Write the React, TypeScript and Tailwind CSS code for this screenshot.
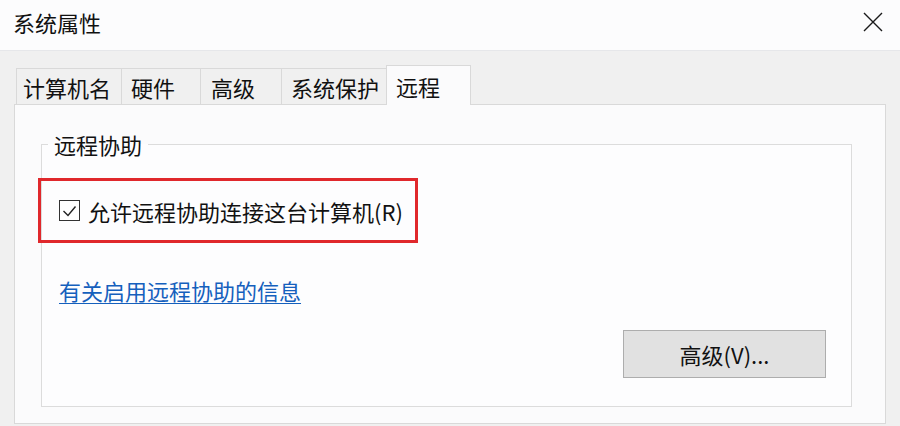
import React from "react";

const tabs = [
  { label: "计算机名", w: "w-[106px]", pl: "pl-[6px]", selected: false },
  { label: "硬件", w: "w-[80px]", pl: "pl-[9px]", selected: false },
  { label: "高级", w: "w-[82px]", pl: "pl-[10px]", selected: false },
  { label: "系统保护", w: "w-[106px]", pl: "pl-[9px]", selected: false },
  { label: "远程", w: "w-[85px]", pl: "pl-[9px]", selected: true },
];

export default function App() {
  return (
    <div
      className="w-[900px] h-[426px] bg-[#f0f0f0] flex flex-col overflow-hidden text-[22px] text-[#111]"
      style={{ fontFamily: '"Noto Sans CJK SC", "Noto Sans", sans-serif' }}
    >
      {/* Title bar */}
      <div className="h-[51px] shrink-0 bg-[#fcfcfd] border-b border-[#e6e7ea] flex items-center justify-between pl-[13px] pr-[17px] pb-[6px]">
        <span className="leading-[30px]">系统属性</span>
        <svg width="20" height="20" viewBox="0 0 20 20" className="text-[#1a1a1a]">
          <path d="M1 1 L19 19 M19 1 L1 19" stroke="currentColor" strokeWidth="1.4" fill="none" />
        </svg>
      </div>

      {/* Body */}
      <div className="flex-1 flex flex-col px-[14px] pt-[14px]">
        {/* Tabs */}
        <div className="relative z-10 flex items-end h-[40px] pl-[2px]">
          {tabs.map((t, i) => (
            <div
              key={t.label}
              className={
                t.selected
                  ? `${t.w} ${t.pl} relative z-10 -ml-px h-[40px] flex items-center bg-[#fbfbfc] border-t border-l border-r border-[#d9d9d9] leading-[30px]`
                  : `${t.w} ${t.pl} ${i === 0 ? "" : "-ml-px"} h-[37px] flex items-center bg-[#f0f0f0] border border-[#d9d9d9] leading-[30px]`
              }
            >
              {t.label}
            </div>
          ))}
        </div>

        {/* Panel */}
        <div className="-mt-px h-[320px] bg-[#fbfbfc] border border-[#d9d9d9] flex flex-col">
          <fieldset className="mt-[24px] ml-[26px] mr-[33px] border border-[#dcdcdc] bg-[#fdfdfe] px-0 pb-[28px] flex flex-col">
            <legend className="ml-[6px] px-[6px] leading-[30px]">远程协助</legend>

            {/* Highlighted checkbox row */}
            <div className="relative z-10 mt-[19px] -ml-[4px] w-[380px] h-[65px] border-[3px] border-[#e0282c] flex items-center pl-[18px] gap-[8px]">
              <div className="w-[21px] h-[21px] border border-[#333] bg-white flex items-center justify-center shrink-0">
                <svg width="19" height="19" viewBox="0 0 19 19">
                  <path d="M3.5 10 L8 14.5 L15.5 5.5" stroke="#222" strokeWidth="1.4" fill="none" />
                </svg>
              </div>
              <span className="leading-[30px]">允许远程协助连接这台计算机(R)</span>
            </div>

            <a className="mt-[32px] ml-[17px] self-start leading-[30px] text-[#1560bd] underline underline-offset-[3px] decoration-1">
              有关启用远程协助的信息
            </a>

            <div className="mt-[25px] flex justify-end pr-[25px]">
              <div className="w-[203px] h-[48px] border border-[#adadad] bg-[#e1e1e1] flex items-center justify-center leading-[30px]">
                高级(V)...
              </div>
            </div>
          </fieldset>
        </div>
      </div>
    </div>
  );
}
